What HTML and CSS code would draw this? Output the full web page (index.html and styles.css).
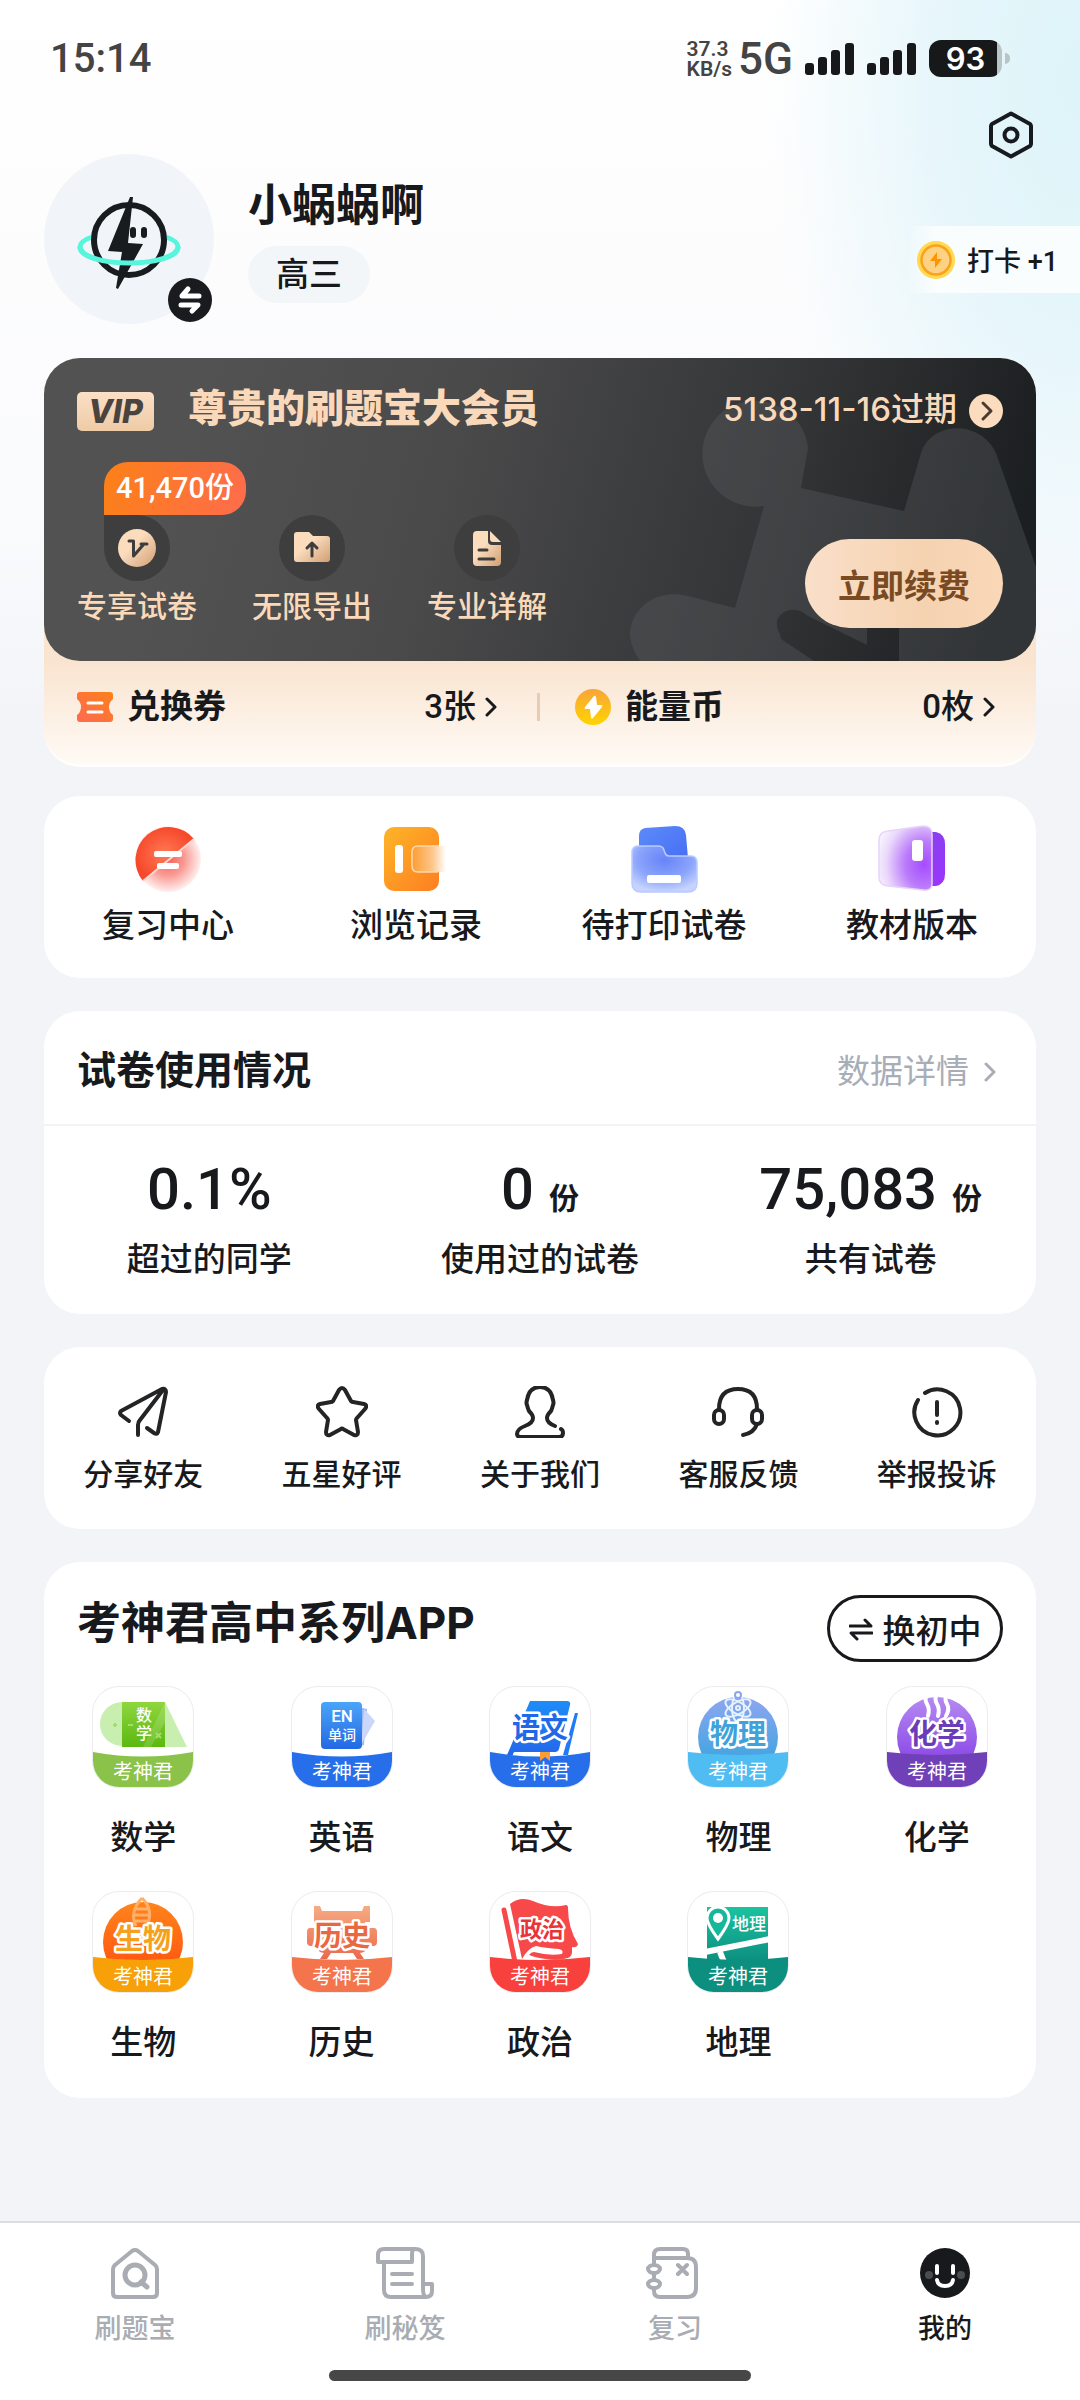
FILE: index.html
```html
<!DOCTYPE html>
<html lang="zh-CN">
  <head>
    <meta charset="UTF-8" />
    <meta name="viewport" content="width=device-width, initial-scale=1.0" />
    <title>我的</title>
    <link rel="stylesheet" href="styles.css" />
  </head>
  <body>
    <!-- Status bar -->
    <div class="status-bar">
      <span class="clock">15:14</span>
      <div class="status-right">
        <div class="net-speed">
          <span>37.3</span>
          <span>KB/s</span>
        </div>
        <span class="net-type">5G</span>
        <svg class="signal" viewBox="0 0 49 34" fill="#161819">
          <rect x="0" y="21" width="9" height="12" rx="3" />
          <rect x="13" y="15" width="9" height="18" rx="3" />
          <rect x="26" y="8" width="9" height="25" rx="3" />
          <rect x="40" y="1" width="9" height="32" rx="3" />
        </svg>
        <svg class="signal" viewBox="0 0 49 34" fill="#161819">
          <rect x="0" y="21" width="9" height="12" rx="3" />
          <rect x="13" y="15" width="9" height="18" rx="3" />
          <rect x="26" y="8" width="9" height="25" rx="3" />
          <rect x="40" y="1" width="9" height="32" rx="3" />
        </svg>
        <span class="battery">93</span>
      </div>
    </div>

    <!-- Profile -->
    <header class="header">
      <div class="profile">
        <div class="avatar">
          <svg class="avatar-img" viewBox="0 0 104 96">
            <path d="M15 43C6 46 3 50 3 53c0 9 22 16 49 16s49-7 49-16c0-3-3-7-12-10" fill="none" stroke="#56f5dc" stroke-width="5" />
            <circle cx="52" cy="46" r="35" fill="#f1f5f9" stroke="#191c1f" stroke-width="6" />
            <path d="M53 3 31 57l14 1-6 36 2 1 25-45-15-1 5-46z" fill="#191c1f" />
            <rect x="53" y="33" width="6" height="11" rx="3" fill="#191c1f" />
            <rect x="64" y="33" width="6" height="11" rx="3" fill="#191c1f" />
            <path d="M3 53c0 9 22 16 49 16s49-7 49-16" fill="none" stroke="#56f5dc" stroke-width="5" />
          </svg>
          <button class="switch-btn" aria-label="切换账号">
            <svg viewBox="0 0 44 44" fill="none" stroke="#fff" stroke-width="5" stroke-linecap="round" stroke-linejoin="round">
              <path d="M31 18H14l6-7M13 27h17l-6 6" />
            </svg>
          </button>
        </div>
        <div class="profile-info">
          <h1 class="user-name">小蜗蜗啊</h1>
          <span class="grade">高三</span>
        </div>
      </div>
      <div class="header-side">
        <button class="settings-btn" aria-label="设置">
          <svg viewBox="0 0 48 48" fill="none" stroke="#171b20" stroke-width="4" stroke-linejoin="round">
            <path d="M24 2.500 43 13q1 1 1 2v18q0 1-1 2L24 45.500 5 35q-1-1-1-2V15q0-1 1-2z" />
            <circle cx="24" cy="24" r="6.500" />
          </svg>
        </button>
        <a class="checkin" href="#">
          <svg class="checkin-coin" viewBox="0 0 38 38">
            <circle cx="19" cy="19" r="19" fill="#ffd94f" />
            <circle cx="19" cy="19" r="14.500" fill="#ffd283" stroke="#f9a21d" stroke-width="2.500" />
            <path d="M20 11l-7 9h5l0 7 7-9h-5z" fill="#ff9300" />
          </svg>
          打卡 +1
        </a>
      </div>
    </header>

    <main class="main">
      <!-- VIP -->
      <section class="vip">
        <div class="vip-card">
          <svg class="vip-mark" viewBox="0 0 412 303">
            <path fill="#5c5f62" fill-opacity=".36" d="M184 90A53 53 0 1 0 140 148L111 250 64 238C30 230 6 252 6 278Q8 292 16 303H190L157 281 156 276Q148 262 160 254 172 248 184 258L243 287V269H275V303H412V209L372 95C357 62 308 62 297 95L280 153 177 130Z" />
          </svg>
          <div class="vip-top">
            <span class="vip-badge">VIP</span>
            <h2 class="vip-title">尊贵的刷题宝大会员</h2>
            <a class="vip-expire" href="#">
              <span>5138-11-16过期</span>
              <svg viewBox="0 0 34 34">
                <circle cx="17" cy="17" r="17" fill="#fcdcbe" />
                <path d="M14 9l8 8-8 8" fill="none" stroke="#4a3a30" stroke-width="3" stroke-linecap="round" stroke-linejoin="round" />
              </svg>
            </a>
          </div>
          <div class="vip-bottom">
            <ul class="vip-features">
              <li>
                <div class="feature-icon has-badge">
                  <span class="count-badge">41,470份</span>
                  <svg viewBox="0 0 38 38">
                    <circle cx="19" cy="19" r="19" fill="url(#gold)" />
                    <path d="M11 12h4.500v15L26 15M23 15h6" fill="none" stroke="#3d3d3d" stroke-width="3" stroke-linecap="round" stroke-linejoin="round" />
                  </svg>
                </div>
                专享试卷
              </li>
              <li>
                <div class="feature-icon">
                  <svg viewBox="0 0 38 38">
                    <path d="M4 3h12l4 4h14q3 0 3 3v20q0 3-3 3H4q-3 0-3-3V6q0-3 3-3z" fill="url(#gold)" />
                    <path d="M19 27V14M14 19l5-5 5 5" fill="none" stroke="#3d3d3d" stroke-width="3" stroke-linecap="round" stroke-linejoin="round" />
                  </svg>
                </div>
                无限导出
              </li>
              <li>
                <div class="feature-icon">
                  <svg viewBox="0 0 38 38">
                    <path d="M9 2h11v10q0 4 4 4h9v17q0 4-4 4H9q-4 0-4-4V6q0-4 4-4z" fill="url(#gold)" />
                    <path d="M22 2l11 11h-8q-3 0-3-3z" fill="#fbdcbd" />
                    <path d="M11 21h8M11 30h15" stroke="#3d3d3d" stroke-width="3" stroke-linecap="round" />
                  </svg>
                </div>
                专业详解
              </li>
            </ul>
            <button class="renew-btn">立即续费</button>
          </div>
        </div>
        <div class="assets">
          <a class="asset" href="#">
            <svg class="asset-icon" viewBox="0 0 36 36">
              <path d="M3 3h30q3 0 3 3v4q-4 3-4 8t4 8v4q0 3-3 3H3q-3 0-3-3v-4q4-3 4-8t-4-8V6q0-3 3-3z" fill="url(#ticket)" />
              <path d="M11 14h14M11 23h14" stroke="#fff" stroke-width="3" stroke-linecap="round" />
            </svg>
            <strong>兑换券</strong>
            <span class="asset-value">3张</span>
            <svg class="chevron" viewBox="0 0 12 20"><path d="M2 2l8 8-8 8" /></svg>
          </a>
          <span class="asset-divider"></span>
          <a class="asset" href="#">
            <svg class="asset-icon" viewBox="0 0 36 36">
              <circle cx="18" cy="18" r="18" fill="url(#coin)" />
              <path d="M19 7 10 18q-1 2 1 2h4l1 9q1 1 2 0l9-11q1-2-1-2h-4l-1-8q-1-2-2-1z" fill="#fff" />
            </svg>
            <strong>能量币</strong>
            <span class="asset-value">0枚</span>
            <svg class="chevron" viewBox="0 0 12 20"><path d="M2 2l8 8-8 8" /></svg>
          </a>
        </div>
      </section>

      <!-- Shortcuts -->
      <nav class="card shortcuts">
        <a href="#">
          <svg class="shortcut-icon" viewBox="0 0 68 68">
            <circle cx="34" cy="34" r="33" fill="url(#redSoft)" />
            <path d="M60 14 9 56A33 33 0 0 1 60 14z" fill="url(#red)" />
            <path d="M60 14 9 56" stroke="#ffd6d0" stroke-width="2" />
            <rect x="20" y="26" width="28" height="6" rx="2" fill="#fff" />
            <rect x="23" y="38" width="22" height="6" rx="2" fill="#fff" />
          </svg>
          复习中心
        </a>
        <a href="#">
          <svg class="shortcut-icon" viewBox="0 0 68 68">
            <rect x="2" y="2" width="55" height="64" rx="10" fill="url(#orange)" />
            <rect x="13" y="20" width="8" height="28" rx="3" fill="#fff" />
            <path d="M64 21H36q-6 0-6 6v14q0 6 6 6h28z" fill="url(#orangeSoft)" />
            <path d="M57 21H36q-6 0-6 6v14q0 6 6 6h20" fill="none" stroke="#ffd9a8" stroke-width="1.500" />
          </svg>
          浏览记录
        </a>
        <a href="#">
          <svg class="shortcut-icon" viewBox="0 0 68 68">
            <path d="M15 3 45 1q10 0 11 9l3 35H9V11q0-7 6-8z" fill="url(#blue)" />
            <path d="M8 21h20q5 0 6 4l1 3q1 3 4 3h22q6 0 6 7v20q0 9-9 9H11q-9 0-9-9V28q0-7 6-7z" fill="url(#blueSoft)" stroke="#b9caff" stroke-width="1.500" />
            <rect x="17" y="50" width="34" height="8" rx="2" fill="#fff" />
          </svg>
          待打印试卷
        </a>
        <a href="#">
          <svg class="shortcut-icon" viewBox="0 0 68 68">
            <path d="M50 7h8q9 2 9 12v30q0 10-9 12h-8z" fill="url(#purple)" />
            <path d="M10 6 45 1q9 0 9 8v50q0 7-9 6l-35-4q-9-1-9-9V15q0-8 9-9z" fill="url(#purpleSoft)" stroke="#e6d4fa" stroke-width="1.500" />
            <rect x="34" y="15" width="11" height="21" rx="3" fill="#fff" />
          </svg>
          教材版本
        </a>
      </nav>

      <!-- Usage -->
      <section class="card usage">
        <div class="usage-head">
          <h2>试卷使用情况</h2>
          <a class="detail-link" href="#">
            数据详情
            <svg class="chevron" viewBox="0 0 12 20"><path d="M2 2l8 8-8 8" /></svg>
          </a>
        </div>
        <div class="usage-body">
          <div class="stat">
            <div class="stat-value">0.1%</div>
            <div class="stat-label">超过的同学</div>
          </div>
          <div class="stat">
            <div class="stat-value">0<small>份</small></div>
            <div class="stat-label">使用过的试卷</div>
          </div>
          <div class="stat">
            <div class="stat-value">75,083<small>份</small></div>
            <div class="stat-label">共有试卷</div>
          </div>
        </div>
      </section>

      <!-- Tools -->
      <nav class="card tools">
        <a href="#">
          <svg class="tool-icon" viewBox="0 0 52 52">
            <path d="M12 35 4 29q-2-2 0-4L45 3q4-1 4 3l-8 40q-1 3-4 1l-7-5M46 4 23 34q-2 2-2 5v10" />
          </svg>
          分享好友
        </a>
        <a href="#">
          <svg class="tool-icon" viewBox="0 0 52 52">
            <path d="M23 4q3-4 6 0l6 11q1 1 2 1l11 2q4 1 1 5l-8 9q-1 1-1 2l2 12q0 4-4 3l-11-6q-1-1-2 0l-11 6q-4 1-4-3l2-12q0-1-1-2l-8-9q-3-4 1-5l11-2q1 0 2-1z" />
          </svg>
          五星好评
        </a>
        <a href="#">
          <svg class="tool-icon" viewBox="0 0 52 52">
            <path d="M41 40q-8-3-8-8 0-3 4-7 1-2 2-6 1-2 0-5Q37 1 26 1T13 14q-1 3 0 5 1 4 2 6 4 4 4 7 0 5-8 8-8 3-8 8 0 3 4 3h38q4 0 4-4 0-3-2-4" />
          </svg>
          关于我们
        </a>
        <a href="#">
          <svg class="tool-icon" viewBox="0 0 52 52">
            <path d="M7 24v-1Q7 3 26 3t19 20v1M45 38q-3 9-14 11" />
            <rect x="2" y="24" width="10" height="14" rx="5" />
            <rect x="40" y="24" width="10" height="14" rx="5" />
          </svg>
          客服反馈
        </a>
        <a href="#">
          <svg class="tool-icon" viewBox="0 0 52 52">
            <path d="M14 7a23 23 0 1 1-7 7M26 16v13" />
            <path d="M26 36v1" />
          </svg>
          举报投诉
        </a>
      </nav>

      <!-- App series -->
      <section class="card apps">
        <div class="apps-head">
          <h2>考神君高中系列APP</h2>
          <button class="stage-btn">
            <svg viewBox="0 0 24 24" fill="none" stroke="#17191c" stroke-width="3" stroke-linecap="round" stroke-linejoin="round">
              <path d="M1 9h21l-6-6M23 16H2l6 6" />
            </svg>
            换初中
          </button>
        </div>
        <div class="app-grid">
          <a href="#">
            <svg class="app-icon" viewBox="0 0 100 100">
              <circle cx="29" cy="37" r="22" fill="#c9efb0" />
              <path d="M72 15 94 60H72z" fill="#c9efb0" />
              <rect x="29" y="15" width="43" height="45" fill="url(#mathG)" />
              <path d="M72 15v20L58 60H50z" fill="#fff" opacity=".15" />
              <path d="M20 38h4M22 36v4M35 38h5M63 46l5 5M68 46l-5 5" stroke="#9fdf6e" stroke-width="2" />
              <text class="sub" x="51" y="34" font-size="16">数</text>
              <text class="sub" x="51" y="52" font-size="16">学</text>
              <path d="M0 65Q50 74 100 65V100H0z" fill="#8bc34a" />
              <text class="brand" x="50" y="92">考神君</text>
            </svg>
            数学
          </a>
          <a href="#">
            <svg class="app-icon" viewBox="0 0 100 100">
              <path d="M66 20l9 2-3 36-8 2z" fill="#9db9f6" />
              <path d="M72 22l11 12-14 24z" fill="#cbd6fb" />
              <rect x="29" y="15" width="41" height="47" rx="4" fill="url(#enG)" />
              <text class="sub" x="50" y="35" font-size="17">EN</text>
              <text class="sub" x="50" y="53" font-size="14">单词</text>
              <path d="M0 65Q50 74 100 65V100H0z" fill="#276eea" />
              <text class="brand" x="50" y="92">考神君</text>
            </svg>
            英语
          </a>
          <a href="#">
            <svg class="app-icon" viewBox="0 0 100 100">
              <path d="M40 14h37q4 0 3 4L69 62q-1 3-4 3H25q-2 0-2 3h-6z" fill="url(#cnG)" />
              <path d="M85 26h3L78 68h-5z" fill="#1f7cf5" />
              <text class="name" x="50" y="51" fill="#2168e8">语文</text>
              <path d="M0 65Q50 74 100 65V100H0z" fill="#276eea" />
              <path d="M50 65h10v9l-5-4-5 4z" fill="#ff9b33" />
              <text class="brand" x="50" y="92">考神君</text>
            </svg>
            语文
          </a>
          <a href="#">
            <svg class="app-icon" viewBox="0 0 100 100">
              <circle cx="50" cy="50" r="40" fill="url(#phyG)" />
              <g fill="none" stroke="#e6f3ff" stroke-width="2">
                <ellipse cx="50" cy="21" rx="6" ry="14" />
                <ellipse cx="50" cy="21" rx="6" ry="14" transform="rotate(60 50 21)" />
                <ellipse cx="50" cy="21" rx="6" ry="14" transform="rotate(120 50 21)" />
                <circle cx="50" cy="21" r="2" />
                <circle cx="50" cy="8" r="3" stroke="#8ba4ee" fill="#fff" />
              </g>
              <text class="name" x="50" y="57" fill="#3fa3da">物理</text>
              <path d="M0 65Q50 71 100 65V100H0z" fill="#4fbcf2" />
              <text class="brand" x="50" y="92">考神君</text>
            </svg>
            物理
          </a>
          <a href="#">
            <svg class="app-icon" viewBox="0 0 100 100">
              <circle cx="50" cy="50" r="40" fill="url(#chemG)" />
              <path d="M40 7q-3 5 0 10t1 12M50 7q-3 5 0 10t1 12M60 7q-3 5 0 10t-1 12" fill="none" stroke="#fff" stroke-width="4" stroke-linecap="round" />
              <text class="name" x="50" y="57" fill="#6a3db8">化学</text>
              <path d="M0 65Q50 71 100 65V100H0z" fill="#7040b8" />
              <text class="brand" x="50" y="92">考神君</text>
            </svg>
            化学
          </a>
          <a href="#">
            <svg class="app-icon" viewBox="0 0 100 100">
              <circle cx="50" cy="50" r="40" fill="url(#bioG)" />
              <path d="M49 6q-13 14-6 28M49 6q12 12 5 28M43 17h12M42 23h14M42 29h14" fill="none" stroke="#ffb066" stroke-width="3" />
              <text class="name" x="50" y="57" fill="#f5a11c">生物</text>
              <path d="M0 65Q50 71 100 65V100H0z" fill="#f7a008" />
              <text class="brand" x="50" y="92">考神君</text>
            </svg>
            生物
          </a>
          <a href="#">
            <svg class="app-icon" viewBox="0 0 100 100">
              <path d="M22 14h6l2 5h40l2-5h6v16h-5v6h9q3 0 3 4v10q0 4-4 4h-5q-1 6-8 7l4 6h-7l-4-6H39l-4 6h-7l4-6q-7-1-8-7h-5q-4 0-4-4V40q0-4 3-4h9v-6h-5z" fill="url(#hisG)" />
              <text class="name" x="50" y="54" fill="#e9683f">历史</text>
              <path d="M0 65Q50 71 100 65V100H0z" fill="#f4754c" />
              <text class="brand" x="50" y="92">考神君</text>
            </svg>
            历史
          </a>
          <a href="#">
            <svg class="app-icon" viewBox="0 0 100 100">
              <path d="M14 18 25 70" stroke="#f8494a" stroke-width="5" stroke-linecap="round" />
              <path d="M20 12Q30 4 43 9q18 8 33 4 2 0 2 3 0 20 10 36-1 4-6 3v5q0 4-4 6-12 4-33-1l-6-2q2-3 5-3 15 4 28 2 2-4-3-5-14-1-23-3-8 2-14 13z" fill="#f8494a" />
              <text class="name small" x="52" y="45" fill="#e93338">政治</text>
              <path d="M0 65Q50 71 100 65V100H0z" fill="#f8403c" />
              <text class="brand" x="50" y="92">考神君</text>
            </svg>
            政治
          </a>
          <a href="#">
            <svg class="app-icon" viewBox="0 0 100 100">
              <rect x="19" y="15" width="61" height="54" fill="url(#geoG)" />
              <path d="M17 60 82 47M32 60l4 10" stroke="#fff" stroke-width="6" />
              <path d="M30 47Q19 32 19 26a11 11 0 0 1 22 0q0 6-11 21z" fill="#17b79a" stroke="#fff" stroke-width="3" />
              <circle cx="30" cy="26" r="5" fill="#fff" />
              <text class="sub" x="61" y="38" font-size="17">地理</text>
              <path d="M0 65Q50 71 100 65V100H0z" fill="#0d8f80" />
              <text class="brand" x="50" y="92">考神君</text>
            </svg>
            地理
          </a>
        </div>
      </section>
    </main>

    <!-- Bottom tabs -->
    <footer class="tab-bar">
      <nav class="tabs">
        <a href="#">
          <svg class="tab-icon" viewBox="0 0 52 52">
            <path d="M23 4q3-2 6 0l17 14q2 2 2 4v24q0 4-4 4H8q-4 0-4-4V22q0-2 2-4z" />
            <circle cx="26" cy="28" r="10" stroke-width="5" />
            <path d="M32 35l6 5" stroke-width="5" />
          </svg>
          刷题宝
        </a>
        <a href="#">
          <svg class="tab-icon" viewBox="0 0 52 52">
            <path d="M36 2H5Q-1 2-1 8v7h34M36 2q-3 0-3 5v8M36 2q8 0 8 7v33q0 8 4 8H12q-7 0-7-7V15M13 27h20M13 37h20M44 37h9v7q0 6-6 6" />
          </svg>
          刷秘笈
        </a>
        <a href="#">
          <svg class="tab-icon" viewBox="0 0 52 52">
            <path d="M5 17V8q0-6 6-6h23q5 0 5 5v4M5 11h33q9 0 9 9v21q0 9-9 9H11q-6 0-6-6v-3M5 31v-4M29 18l9 9M38 18l-9 9" />
            <ellipse cx="5" cy="22" rx="6" ry="4" fill="#fff" />
            <ellipse cx="5" cy="37" rx="6" ry="4" fill="#fff" />
          </svg>
          复习
        </a>
        <a class="active" href="#">
          <svg class="tab-icon" viewBox="0 0 52 52">
            <circle cx="26" cy="26" r="25" fill="#17191c" stroke="none" />
            <circle cx="10" cy="28" r="4" fill="#4a4c4f" stroke="none" />
            <circle cx="42" cy="28" r="4" fill="#4a4c4f" stroke="none" />
            <path d="M18 19v7M34 19v7M18 33q1 6 8 6t8-6" stroke="#fff" />
          </svg>
          我的
        </a>
      </nav>
      <div class="home-indicator"></div>
    </footer>

    <!-- Shared gradients -->
    <svg class="defs" width="0" height="0" aria-hidden="true">
      <defs>
        <linearGradient id="gold" x1="0" y1="0" x2="1" y2="1"><stop offset=".4" stop-color="#fbdcbd" /><stop offset="1" stop-color="#cf9f73" /></linearGradient>
        <linearGradient id="ticket" x1="1" y1="0" x2="0" y2="1"><stop offset="0" stop-color="#fc8019" /><stop offset="1" stop-color="#fe6a52" /></linearGradient>
        <linearGradient id="coin" x1="0" y1="0" x2="0" y2="1"><stop offset="0" stop-color="#f9a43a" /><stop offset="1" stop-color="#ffd400" /></linearGradient>
        <radialGradient id="red"><stop offset="0" stop-color="#ff7a55" /><stop offset="1" stop-color="#f6492c" /></radialGradient>
        <radialGradient id="redSoft"><stop offset="0" stop-color="#f5605a" /><stop offset=".5" stop-color="#fa9a94" /><stop offset="1" stop-color="#fff0ee" /></radialGradient>
        <linearGradient id="orange" x1="0" y1="0" x2="1" y2="1"><stop offset="0" stop-color="#fdb528" /><stop offset="1" stop-color="#fd7e22" /></linearGradient>
        <linearGradient id="orangeSoft"><stop offset="0" stop-color="#fd9d33" /><stop offset=".6" stop-color="#fec68c" /><stop offset="1" stop-color="#fff" /></linearGradient>
        <linearGradient id="blue" x1="0" y1="0" x2="1" y2="1"><stop offset="0" stop-color="#5c8bf8" /><stop offset="1" stop-color="#456af5" /></linearGradient>
        <radialGradient id="blueSoft" cy=".3" r=".7"><stop offset="0" stop-color="#6784f8" /><stop offset=".6" stop-color="#8ba4fb" /><stop offset="1" stop-color="#c6d3ff" /></radialGradient>
        <linearGradient id="purple" x1="0" y1="0" x2="0" y2="1"><stop offset="0" stop-color="#8a3ff0" /><stop offset="1" stop-color="#9a35fa" /></linearGradient>
        <radialGradient id="purpleSoft" cx=".85" cy=".6" r=".9"><stop offset="0" stop-color="#a64bff" /><stop offset=".4" stop-color="#bb7cfa" /><stop offset=".8" stop-color="#ead9fb" /><stop offset="1" stop-color="#f7f0fe" /></radialGradient>
        <linearGradient id="mathG" x1="0" y1="0" x2="0" y2="1"><stop offset="0" stop-color="#8fd63f" /><stop offset="1" stop-color="#5cb80f" /></linearGradient>
        <linearGradient id="enG" x1="0" y1="0" x2="0" y2="1"><stop offset="0" stop-color="#4aa5f8" /><stop offset="1" stop-color="#2368e4" /></linearGradient>
        <linearGradient id="cnG" x1="0" y1="0" x2="0" y2="1"><stop offset="0" stop-color="#1e8cf8" /><stop offset="1" stop-color="#2368ea" /></linearGradient>
        <linearGradient id="phyG" x1="0" y1="0" x2="0" y2="1"><stop offset="0" stop-color="#8ea6f0" /><stop offset=".7" stop-color="#4aa5e2" /></linearGradient>
        <linearGradient id="chemG" x1="0" y1="0" x2="0" y2="1"><stop offset="0" stop-color="#b58af2" /><stop offset=".7" stop-color="#9050e8" /></linearGradient>
        <linearGradient id="bioG" x1="0" y1="0" x2="0" y2="1"><stop offset="0" stop-color="#ff851c" /><stop offset=".7" stop-color="#ff5c12" /></linearGradient>
        <linearGradient id="hisG" x1="0" y1="0" x2="0" y2="1"><stop offset="0" stop-color="#f7ab84" /><stop offset="1" stop-color="#ea6a4e" /></linearGradient>
        <linearGradient id="geoG" x1="0" y1="0" x2="0" y2="1"><stop offset="0" stop-color="#1bc3a0" /><stop offset="1" stop-color="#0d8f80" /></linearGradient>
      </defs>
    </svg>
  </body>
</html>
```
FILE: styles.css
```css
* {
  box-sizing: border-box;
}
body {
  margin: 0;
  min-height: 100vh;
  display: flex;
  flex-direction: column;
  font-family: Roboto, "Noto Sans CJK SC", sans-serif;
  font-weight: 500;
  color: #17191c;
  background:
    radial-gradient(ellipse 310px 580px at 100% 80px, #ddf4f8 0, #e6f6fb 45%, rgba(255, 255, 255, 0) 100%) no-repeat,
    linear-gradient(#fff 0, #fcfcfd 300px, #fafbfd 520px, #f2f4f8 720px);
}
h1,
h2,
ul {
  margin: 0;
  padding: 0;
}
a {
  color: inherit;
  text-decoration: none;
}
button {
  font: inherit;
  color: inherit;
  border: none;
  background: none;
  padding: 0;
  cursor: pointer;
}
svg {
  display: block;
  flex: none;
}
.defs {
  position: absolute;
}

/* Status bar */
.status-bar {
  display: flex;
  justify-content: space-between;
  align-items: center;
  height: 111px;
  padding: 6px 78px 0 50px;
  color: #444;
}
.clock {
  font-size: 40px;
}
.status-right {
  display: flex;
  align-items: center;
}
.net-speed {
  display: flex;
  flex-direction: column;
  font-size: 21px;
  font-weight: 600;
  line-height: 20px;
}
.net-type {
  font-size: 44px;
  line-height: 44px;
  margin: 0 12px 0 6px;
}
.signal {
  width: 49px;
  height: 34px;
  margin-right: 13px;
}
.battery {
  position: relative;
  width: 73px;
  height: 37px;
  border-radius: 12px;
  background: linear-gradient(90deg, #161819 68px, #b9c4c6 68px);
  color: #fff;
  font-family: Inter, sans-serif;
  font-size: 31px;
  font-weight: 600;
  line-height: 37px;
  text-align: center;
}
.battery::after {
  content: "";
  position: absolute;
  right: -8px;
  top: 13px;
  width: 5px;
  height: 11px;
  border-radius: 0 5px 5px 0;
  background: #b9c4c6;
}

/* Profile */
.header {
  display: flex;
  justify-content: space-between;
  align-items: flex-start;
  padding: 0 0 34px 44px;
}
.profile {
  display: flex;
  gap: 34px;
  padding-top: 43px;
}
.avatar {
  position: relative;
  display: flex;
  justify-content: center;
  align-items: center;
  width: 170px;
  height: 170px;
  border-radius: 50%;
  background: #f1f5f9;
}
.avatar-img {
  width: 104px;
  height: 96px;
  margin-top: 6px;
}
.switch-btn {
  position: absolute;
  right: 2px;
  bottom: 2px;
  width: 44px;
  height: 44px;
  border-radius: 50%;
  background: #191b1f;
}
.profile-info {
  display: flex;
  flex-direction: column;
  align-items: flex-start;
  gap: 12px;
  padding-top: 24px;
}
.user-name {
  font-size: 44px;
  line-height: 56px;
  font-weight: 700;
}
.grade {
  padding: 0 28px;
  border-radius: 30px;
  background: #f3f6f9;
  font-size: 33px;
  line-height: 57px;
}
.header-side {
  display: flex;
  flex-direction: column;
  align-items: flex-end;
  gap: 67px;
}
.settings-btn {
  width: 48px;
  height: 48px;
  margin-right: 45px;
}
.checkin {
  display: flex;
  align-items: center;
  gap: 12px;
  height: 67px;
  padding: 0 22px 0 10px;
  background: linear-gradient(90deg, rgba(255, 255, 255, 0), rgba(255, 255, 255, 0.8) 30px);
  font-size: 27px;
}
.checkin-coin {
  width: 38px;
  height: 38px;
}

/* VIP */
.main {
  padding: 0 44px;
}
.vip {
  margin-bottom: 29px;
  border-radius: 36px;
  border-bottom: 3px solid #fffefc;
  background: linear-gradient(#f9e4d0 0, #f9e4d0 303px, #fffaf5 100%);
}
.vip-card {
  position: relative;
  overflow: hidden;
  padding: 33px;
  border-radius: 36px;
  background: linear-gradient(105deg, #525252 15%, #4a4a4b 40%, #353638 70%, #1c1f21 95%);
  color: #f9d9ba;
}
.vip-mark {
  position: absolute;
  right: 0;
  bottom: 0;
  width: 412px;
  height: 303px;
}
.vip-top {
  position: relative;
  display: flex;
  align-items: center;
}
.vip-badge {
  width: 77px;
  border-radius: 5px;
  background: linear-gradient(#fbdfc6, #efcba6);
  color: #4a4440;
  font-family: Inter, sans-serif;
  font-size: 32px;
  font-weight: 800;
  font-style: italic;
  line-height: 39px;
  text-align: center;
}
.vip-title {
  margin-left: 34px;
  padding-bottom: 4px;
  font-size: 39px;
  line-height: 36px;
  font-weight: 900;
}
.vip-expire {
  display: flex;
  align-items: center;
  gap: 12px;
  margin-left: auto;
  font-family: Inter, "Noto Sans CJK SC", sans-serif;
  font-size: 33px;
  line-height: 36px;
}
.vip-expire span {
  padding-bottom: 4px;
}
.vip-expire svg {
  width: 34px;
  height: 34px;
}
.vip-bottom {
  position: relative;
  display: flex;
  justify-content: space-between;
  align-items: flex-end;
  margin-top: 84px;
}
.vip-features {
  display: flex;
  gap: 55px;
  list-style: none;
  font-size: 30px;
  line-height: 42px;
}
.vip-features li {
  display: flex;
  flex-direction: column;
  align-items: center;
  gap: 5px;
}
.feature-icon {
  position: relative;
  display: flex;
  justify-content: center;
  align-items: center;
  width: 66px;
  height: 66px;
  border-radius: 50%;
  background: #3e3e3f;
}
.feature-icon svg {
  width: 38px;
  height: 38px;
}
.feature-icon.has-badge {
  border-top-left-radius: 0;
}
.count-badge {
  position: absolute;
  left: 0;
  bottom: 100%;
  padding: 0 12px;
  border-radius: 24px 24px 24px 0;
  background: linear-gradient(100deg, #fc8018, #fe6c4c);
  color: #fff;
  font-size: 29px;
  line-height: 53px;
  white-space: nowrap;
}
.renew-btn {
  width: 198px;
  height: 89px;
  border-radius: 45px;
  background: linear-gradient(90deg, #fadfc9, #f5d3b1 60%, #fad7b7);
  color: #7a4b22;
  font-size: 33px;
  font-weight: 700;
}
.assets {
  display: flex;
  align-items: center;
  padding: 0 41px 11px 33px;
  font-size: 33px;
  line-height: 92px;
}
.asset {
  display: flex;
  align-items: center;
  flex: 1;
}
.asset strong {
  margin-left: 14px;
  font-weight: 700;
}
.asset-icon {
  width: 36px;
  height: 36px;
}
.asset-value {
  margin: 0 9px 0 auto;
}
.asset-divider {
  width: 3px;
  height: 28px;
  margin: 0 35px 0 40px;
  background: #e8cbb0;
}
.chevron {
  width: 12px;
  height: 20px;
  fill: none;
  stroke: currentColor;
  stroke-width: 3;
  stroke-linecap: round;
  stroke-linejoin: round;
}

/* Cards */
.card {
  margin-bottom: 33px;
  border-radius: 36px;
  background: #fff;
}
.shortcuts,
.tools {
  display: flex;
}
.shortcuts a,
.tools a {
  display: flex;
  flex-direction: column;
  align-items: center;
  flex: 1;
}
.shortcuts {
  padding: 29px 0 30px;
  font-size: 33px;
  line-height: 45px;
}
.shortcuts a {
  gap: 10px;
}
.shortcut-icon {
  width: 68px;
  height: 68px;
}
.usage-head {
  display: flex;
  justify-content: space-between;
  align-items: center;
  padding: 8px 40px 0 33px;
  border-bottom: 2px solid #f2f3f5;
  line-height: 105px;
}
.usage-head h2 {
  font-size: 39px;
}
.detail-link {
  display: flex;
  align-items: center;
  gap: 15px;
  color: #a8adb6;
  font-size: 33px;
  font-weight: 400;
}
.usage-body {
  display: flex;
  padding: 28px 0 32px;
}
.stat {
  flex: 1;
}
.stat-value {
  display: flex;
  justify-content: center;
  align-items: baseline;
  gap: 15px;
  height: 70px;
  font-size: 58px;
  line-height: 70px;
}
.stat-value small {
  font-size: 30px;
  font-weight: 700;
}
.stat-label {
  margin-top: 13px;
  font-size: 33px;
  line-height: 45px;
  text-align: center;
}
.tools {
  padding: 39px 0 32px;
  font-size: 30px;
  line-height: 45px;
}
.tools a {
  gap: 14px;
}
.tool-icon {
  width: 52px;
  height: 52px;
  fill: none;
  stroke: #232426;
  stroke-width: 4;
  stroke-linecap: round;
  stroke-linejoin: round;
}

/* Apps */
.apps {
  padding: 33px 0;
}
.apps-head {
  display: flex;
  justify-content: space-between;
  align-items: flex-start;
  padding: 0 33px;
}
.apps-head h2 {
  font-family: Inter, "Noto Sans CJK SC", sans-serif;
  font-size: 44px;
  line-height: 56px;
}
.stage-btn {
  display: flex;
  align-items: center;
  justify-content: center;
  gap: 10px;
  width: 176px;
  height: 67px;
  border: 3px solid #17191c;
  border-radius: 34px;
  font-size: 33px;
}
.stage-btn svg {
  width: 24px;
  height: 24px;
}
.app-grid {
  display: grid;
  grid-template-columns: repeat(5, 1fr);
  row-gap: 32px;
  margin-top: 25px;
  font-size: 33px;
  line-height: 45px;
}
.app-grid a {
  display: flex;
  flex-direction: column;
  align-items: center;
  gap: 28px;
}
.app-icon {
  width: 100px;
  height: 100px;
  border-radius: 26px;
  box-shadow: 0 0 0 1px #ececef;
}
.app-icon text {
  text-anchor: middle;
}
.app-icon .sub {
  fill: #fff;
  font-weight: 500;
}
.app-icon .brand {
  fill: #fff;
  font-size: 20px;
  font-weight: 400;
}
.app-icon .name {
  font-size: 28px;
  font-weight: 700;
  stroke: #fff;
  stroke-width: 5px;
  stroke-linejoin: round;
  paint-order: stroke;
}
.app-icon .name.small {
  font-size: 22px;
}

/* Bottom tabs */
.tab-bar {
  margin-top: auto;
  border-top: 2px solid #dcdde2;
  background: #fff;
  padding: 24px 0 19px;
}
.tabs {
  display: flex;
  color: #a9adb3;
  font-size: 27px;
  line-height: 38px;
}
.tabs a {
  display: flex;
  flex-direction: column;
  align-items: center;
  flex: 1;
  gap: 11px;
}
.tabs .active {
  color: #17191c;
}
.tab-icon {
  width: 52px;
  height: 52px;
  overflow: visible;
  fill: none;
  stroke: #a9adb3;
  stroke-width: 4;
  stroke-linecap: round;
  stroke-linejoin: round;
}
.home-indicator {
  width: 39%;
  height: 11px;
  margin: 22px auto 0;
  border-radius: 6px;
  background: #474747;
}
```
